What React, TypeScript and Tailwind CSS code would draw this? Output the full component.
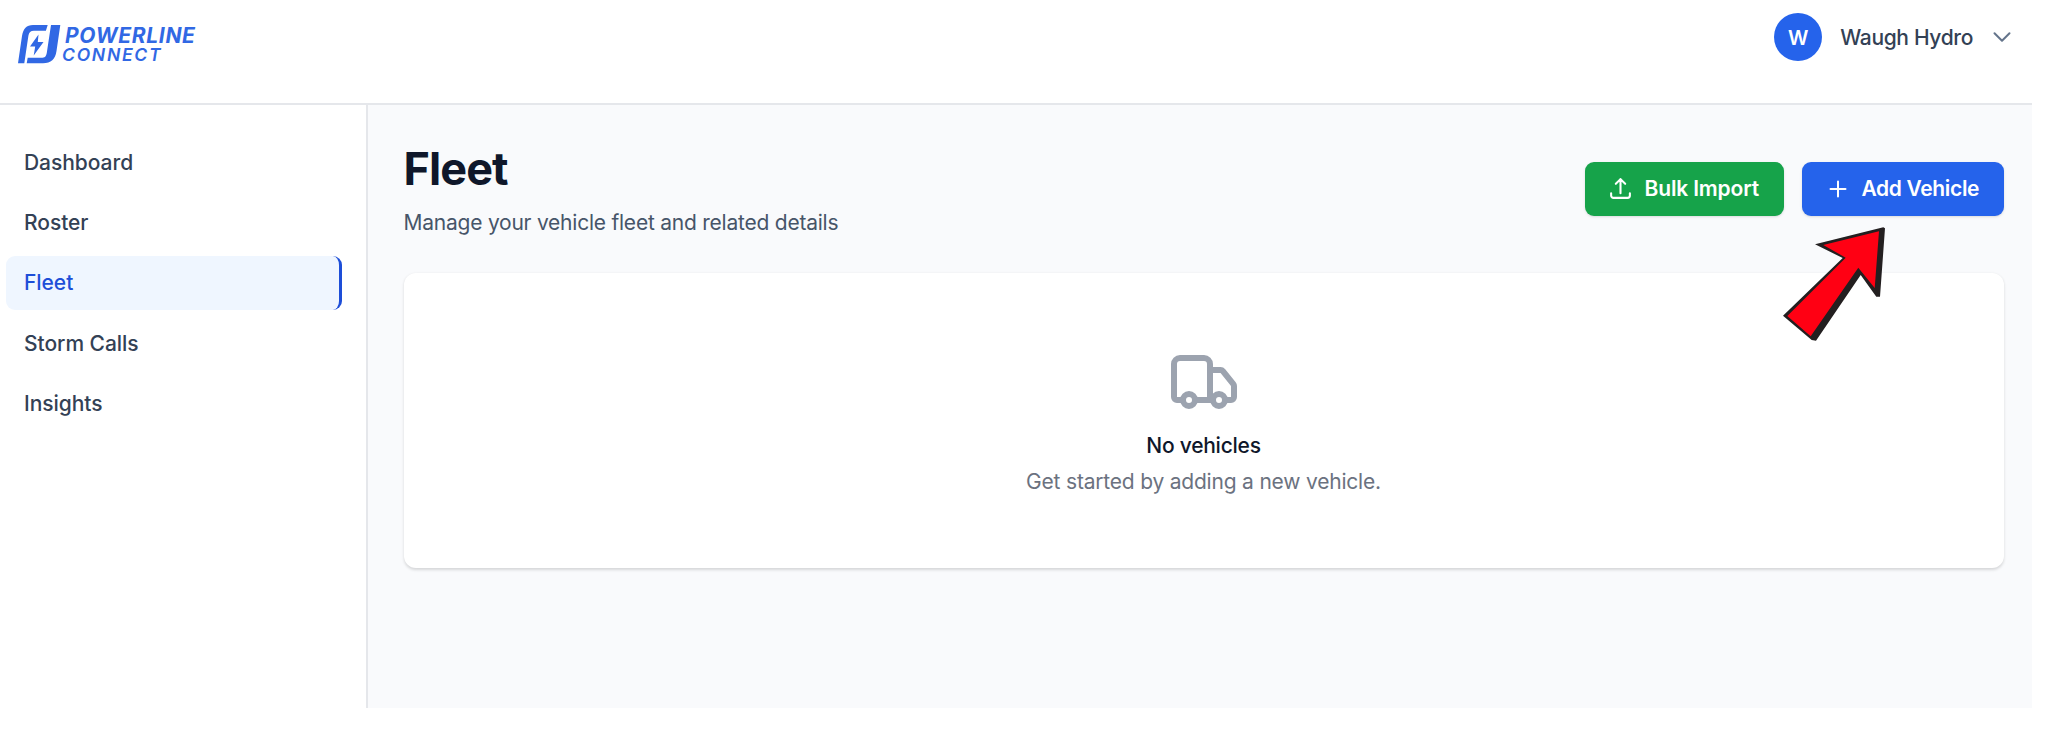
import { clsx } from "clsx";
import { Truck } from "lucide-react";
import {
  HiOutlineArrowUpTray,
  HiOutlineChevronDown,
  HiOutlinePlus,
} from "react-icons/hi2";

const navItems = [
  { label: "Dashboard", active: false },
  { label: "Roster", active: false },
  { label: "Fleet", active: true },
  { label: "Storm Calls", active: false },
  { label: "Insights", active: false },
];

function Logo() {
  return (
    <div className="flex items-start text-[#3168e4]">
      <svg viewBox="0 0 43 39" className="h-[39px] w-[43px]" fill="currentColor">
        <path d="M0 38.3 4 11C5.2 3.8 8.500 0 15 0h14.700l-1.800 5.800H16c-3.500 0-5 1.700-5.600 5L6.300 38.300Z" />
        <path d="M33 0h9.300L38.500 26C37.300 34.200 33 38.300 25 38.300H8.700l1-5.500h13.500c3.700 0 5-1.300 5.600-5Z" />
        <path d="m20.500 9.500-8.500 12h5.200L15.700 30.500l9.800-13.500h-5.700Z" />
      </svg>
      <div className="flex flex-col pt-0.5 italic">
        <span className="pl-[4px] text-[21px] leading-[18px] font-bold tracking-[0.7px]">POWERLINE</span>
        <span className="pl-px text-[17.5px] leading-[20px] font-semibold tracking-[1.75px]">CONNECT</span>
      </div>
    </div>
  );
}

function Header() {
  return (
    <header className="flex h-[105px] w-[2032px] items-start justify-between border-b-2 border-[#e5e7eb] bg-white">
      <div className="pt-[25px] pl-[18px]">
        <Logo />
      </div>
      <div className="flex items-center pt-[13px] pr-[18px]">
        <span className="flex size-12 items-center justify-center rounded-full bg-[#2563eb] pt-px text-[20px] font-semibold text-white">
          W
        </span>
        <span className="ml-[18px] pt-px text-[21px] font-medium tracking-[-0.35px] text-[#334155]">
          Waugh Hydro
        </span>
        <HiOutlineChevronDown className="ml-[17px] size-6 stroke-2 text-[#64748b]" />
      </div>
    </header>
  );
}

function Sidebar() {
  return (
    <nav className="flex w-[368px] shrink-0 flex-col gap-1.5 border-r-2 border-[#e5e7eb] bg-white pt-[30px] pr-6 pl-1.5">
      {navItems.map((item) => (
        <a
          key={item.label}
          className={clsx(
            "flex h-[54.3px] items-center rounded-[9px] pt-px pl-[18px] text-[21px] font-medium tracking-[-0.05px]",
            item.active
              ? "border-r-3 border-[#1d4ed8] bg-[#eff6ff] text-[#1d4ed8]"
              : "text-[#334155]",
          )}
        >
          {item.label}
        </a>
      ))}
    </nav>
  );
}

// Red pointer laid over the page, tip just under the Add Vehicle button
function PointerArrow() {
  return (
    <svg viewBox="0 0 103 114" className="absolute top-[227px] left-[1783px] h-[114px] w-[103px]">
      <path
        d="M32 17.300 100.300.300 102 1.300 97 69.700H93.300L77.700 48 33 113.700 28.700 113 0 88.700 59.700 31Z"
        fill="#231f20"
      />
      <path d="M40.300 18 96 4.300 91.700 61 75.300 40.700 27.700 109.300 4.300 89 62.700 30.700Z" fill="#ff0013" />
    </svg>
  );
}

export default function App() {
  return (
    <div className="relative h-[740px] w-[2048px] overflow-hidden bg-white font-['Inter',sans-serif]">
      <Header />
      <div className="flex h-[603px] w-[2032px]">
        <Sidebar />
        <main className="flex-1 bg-[#f9fafc] pt-[41px] pr-[28.5px] pl-[35.5px]">
          <div className="flex items-start justify-between">
            <div>
              <h1 className="text-[45px] leading-[45px] font-bold tracking-[-0.9px] text-[#0f172a]">
                Fleet
              </h1>
              <p className="mt-[17px] text-[21px] leading-[30px] tracking-[-0.23px] text-[#475569]">
                Manage your vehicle fleet and related details
              </p>
            </div>
            <div className="flex gap-[18px] pt-[15.5px]">
              <button className="flex h-[54px] w-[199px] items-center rounded-[9px] bg-[#16a34a] pl-[23.5px] text-[21px] font-semibold tracking-[-0.15px] text-white shadow-sm">
                <HiOutlineArrowUpTray className="mr-[11.5px] size-[25px] stroke-2" />
                <span className="pt-px">Bulk Import</span>
              </button>
              <button className="flex h-[54px] w-[202px] items-center rounded-[9px] bg-[#2563eb] pl-6 text-[21px] font-semibold tracking-[-0.35px] text-white shadow-sm">
                <HiOutlinePlus className="mr-3 size-6 stroke-2" />
                <span className="pt-px">Add Vehicle</span>
              </button>
            </div>
          </div>
          <div className="mt-[35px] flex h-[295px] flex-col items-center rounded-xl bg-white pt-[72.5px] shadow-[0_1.5px_3px_rgba(0,0,0,0.14)]">
            <Truck className="size-[72px] text-[#9ca3af]" />
            <h3 className="mt-[13px] text-[21px] leading-[30px] font-medium tracking-[-0.25px] text-[#0f172a]">
              No vehicles
            </h3>
            <p className="mt-1.5 text-[21px] leading-[30px] tracking-[-0.2px] text-[#6b7280]">
              Get started by adding a new vehicle.
            </p>
          </div>
        </main>
      </div>
      <PointerArrow />
    </div>
  );
}
